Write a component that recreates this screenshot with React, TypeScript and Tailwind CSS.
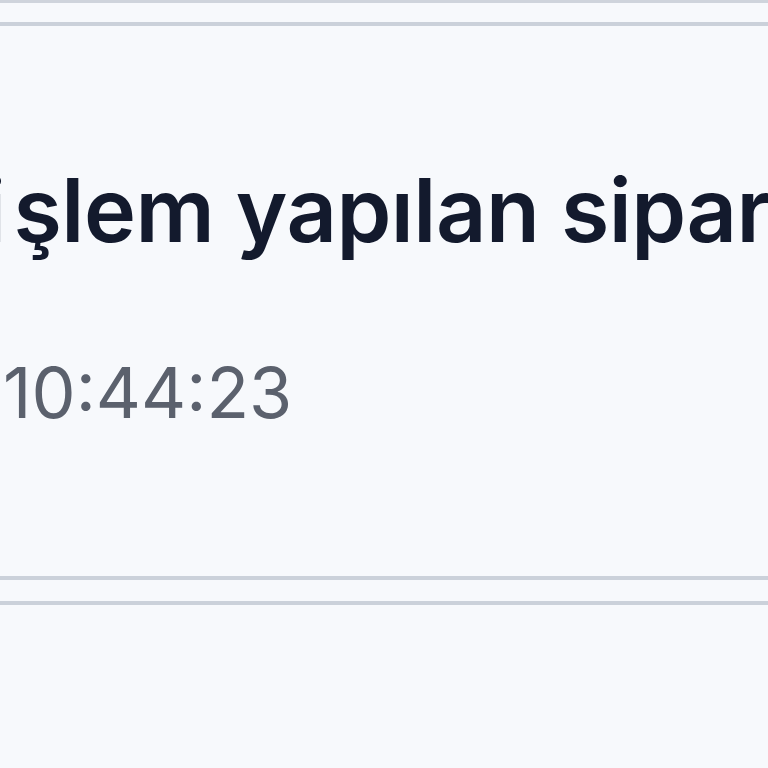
export default function App() {
  return (
    <div className="h-[768px] w-[768px] overflow-hidden bg-[#f7f9fc]" style={{ fontFamily: "Inter, 'Noto Sans', sans-serif" }}>
      <div className="h-[3px] bg-[#cfd4dc]" />
      <div className="h-[19px]" />
      <div className="border-y-[4px] border-[#cbd1da] h-[558px] bg-[#f7f9fc] pt-[140px]">
        <div className="-ml-[17px] whitespace-nowrap text-[88px] font-semibold leading-none text-[#131a2d] tracking-[-0.5px]">
          <span className="mr-[8px]">i</span>şlem yapılan siparişler
        </div>
        <div className="mt-[104px] ml-[3px] text-[70px] leading-none text-[#5b616d]">10:44:23</div>
      </div>
      <div className="h-[21px]" />
      <div className="border-t-[4px] border-[#cbd1da]" />
    </div>
  );
}
